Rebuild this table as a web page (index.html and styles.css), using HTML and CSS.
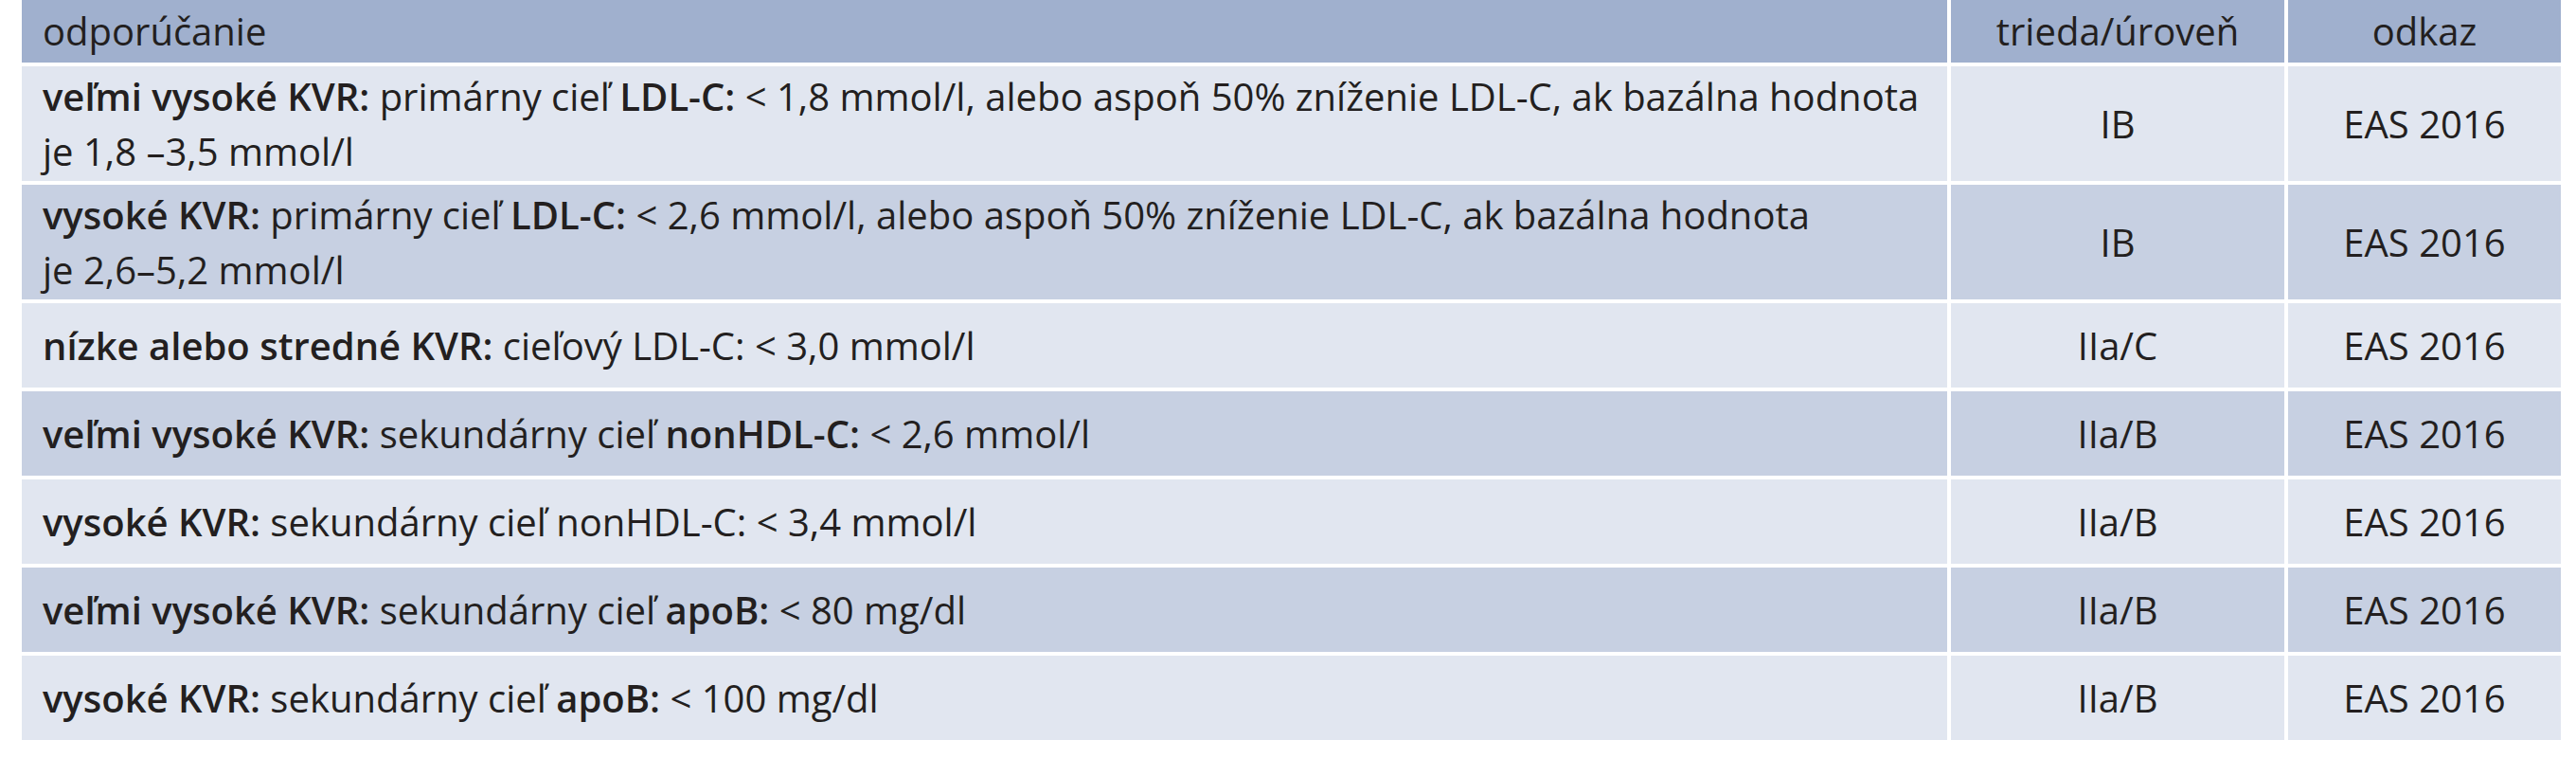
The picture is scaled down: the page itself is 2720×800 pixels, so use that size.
FILE: index.html
```html
<!DOCTYPE html>
<html lang="sk">
<head>
<meta charset="utf-8">
<title>Ciele liečby</title>
<link rel="stylesheet" href="styles.css">
</head>
<body>
<div class="page">
  <div class="table">
    <div class="row head">
      <div class="cell c1">odporúčanie</div>
      <div class="cell c2">trieda/úroveň</div>
      <div class="cell c3">odkaz</div>
    </div>
    <div class="row light tall">
      <div class="cell c1"><span><b>veľmi vysoké KVR:</b> primárny cieľ <b>LDL-C:</b> &lt; 1,8 mmol/l, alebo aspoň 50% zníženie LDL-C, ak bazálna hodnota<br>je 1,8 –3,5 mmol/l</span></div>
      <div class="cell c2">IB</div>
      <div class="cell c3">EAS 2016</div>
    </div>
    <div class="row dark tall">
      <div class="cell c1"><span><b>vysoké KVR:</b> primárny cieľ <b>LDL-C:</b> &lt; 2,6 mmol/l, alebo aspoň 50% zníženie LDL-C, ak bazálna hodnota<br>je 2,6–5,2 mmol/l</span></div>
      <div class="cell c2">IB</div>
      <div class="cell c3">EAS 2016</div>
    </div>
    <div class="row light">
      <div class="cell c1"><span><b>nízke alebo stredné KVR:</b> cieľový LDL-C: &lt; 3,0 mmol/l</span></div>
      <div class="cell c2">IIa/C</div>
      <div class="cell c3">EAS 2016</div>
    </div>
    <div class="row dark">
      <div class="cell c1"><span><b>veľmi vysoké KVR:</b> sekundárny cieľ <b>nonHDL-C:</b> &lt; 2,6 mmol/l</span></div>
      <div class="cell c2">IIa/B</div>
      <div class="cell c3">EAS 2016</div>
    </div>
    <div class="row light">
      <div class="cell c1"><span><b>vysoké KVR:</b> sekundárny cieľ nonHDL-C: &lt; 3,4 mmol/l</span></div>
      <div class="cell c2">IIa/B</div>
      <div class="cell c3">EAS 2016</div>
    </div>
    <div class="row dark">
      <div class="cell c1"><span><b>veľmi vysoké KVR:</b> sekundárny cieľ <b>apoB:</b> &lt; 80 mg/dl</span></div>
      <div class="cell c2">IIa/B</div>
      <div class="cell c3">EAS 2016</div>
    </div>
    <div class="row light">
      <div class="cell c1"><span><b>vysoké KVR:</b> sekundárny cieľ <b>apoB:</b> &lt; 100 mg/dl</span></div>
      <div class="cell c2">IIa/B</div>
      <div class="cell c3">EAS 2016</div>
    </div>
  </div>
</div>
</body>
</html>
```

FILE: styles.css
```css
html, body {
  margin: 0;
  padding: 0;
  background: #ffffff;
}

.page {
  padding-left: 23px;
  font-family: "Open Sans", "DejaVu Sans", sans-serif;
  font-size: 40px;
  color: #231f20;
}

.table {
  display: flex;
  flex-direction: column;
  gap: 4px;
  width: 2681px;
}

.row {
  display: grid;
  grid-template-columns: 2033px 352px 288px;
  column-gap: 4px;
  height: 89px;
}

.row.tall {
  height: 121px;
}

.row.head {
  height: 66px;
}

.cell {
  display: flex;
  align-items: center;
  line-height: 58px;
  white-space: nowrap;
}

.c1 {
  padding-left: 22px;
}

.c2, .c3 {
  justify-content: center;
}

.head .cell {
  background: #a0b0ce;
  align-items: flex-end;
  padding-bottom: 4px;
}

.light .cell {
  background: #e1e6f0;
}

.dark .cell {
  background: #c7d0e2;
}

b {
  font-weight: 600;
}
```
